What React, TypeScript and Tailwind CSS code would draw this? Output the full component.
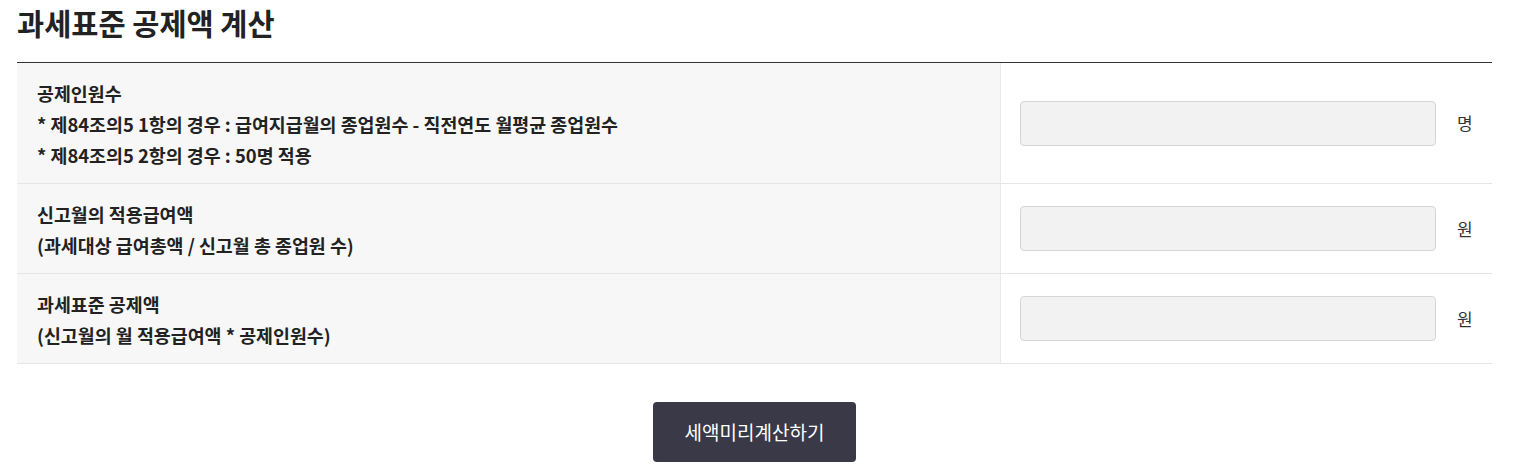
const ROWS = [
  {
    lines: [
      '공제인원수',
      '* 제84조의5 1항의 경우 : 급여지급월의 종업원수 - 직전연도 월평균 종업원수',
      '* 제84조의5 2항의 경우 : 50명 적용',
    ],
    unit: '명',
  },
  {
    lines: ['신고월의 적용급여액', '(과세대상 급여총액 / 신고월 총 종업원 수)'],
    unit: '원',
  },
  {
    lines: ['과세표준 공제액', '(신고월의 월 적용급여액 * 공제인원수)'],
    unit: '원',
  },
];

export default function App() {
  return (
    <div
      className="w-[1522px] h-[473px] bg-white text-[#222] overflow-hidden"
      style={{ fontFamily: '"Noto Sans CJK KR", "Noto Sans", sans-serif' }}
    >
      <div className="pl-[17px] pr-[30px]">
        {/* Title */}
        <h2 className="text-[29.5px] font-bold leading-[44px] h-[62px]">과세표준 공제액 계산</h2>

        {/* Table */}
        <div className="border-t border-[#333] w-[1475px]">
          {ROWS.map((row, i) => (
            <div key={i} className="flex border-b border-[#e5e5e5]">
              <div className="w-[984px] bg-[#f7f7f7] border-r border-[#e9e9e9] px-5 pt-[15px] pb-[12px]">
                {row.lines.map((l, j) => (
                  <div key={j} className="text-[18.4px] font-bold leading-[31px] text-[#222]">
                    {l}
                  </div>
                ))}
              </div>
              <div className="flex-1 flex items-center pl-[19px]">
                <div className="w-[416px] h-[45px] bg-[#f2f2f2] border border-[#d6d6d6] rounded-[4px]" />
                <span className="ml-[21px] text-[17px] text-[#333]">{row.unit}</span>
              </div>
            </div>
          ))}
        </div>

        {/* Button */}
        <div className="flex justify-center w-[1475px] pt-[38px]">
          <button className="w-[203px] h-[60px] bg-[#393947] text-white text-[19px] rounded-[4px]">
            세액미리계산하기
          </button>
        </div>
      </div>
    </div>
  );
}
